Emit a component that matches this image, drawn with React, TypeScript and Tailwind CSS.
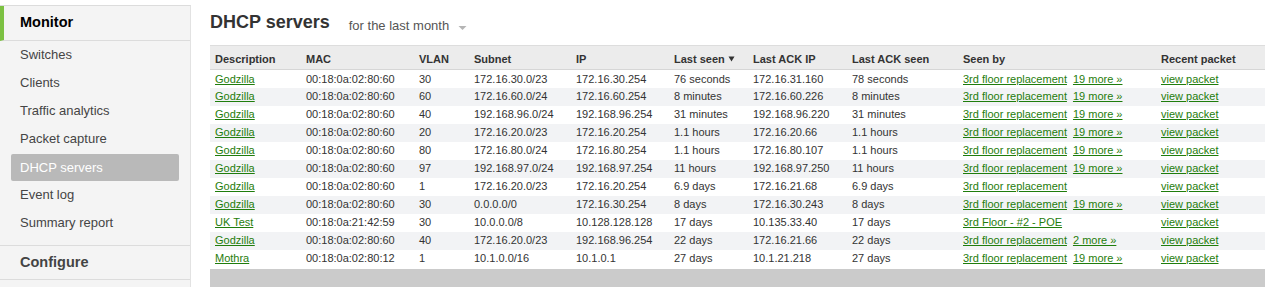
import React from "react";

type Row = {
  d: string; mac: string; vlan: string; subnet: string; ip: string; seen: string;
  ackip: string; ackseen: string; by: string; more?: string;
};

const rows: Row[] = [
  { d: "Godzilla", mac: "00:18:0a:02:80:60", vlan: "30", subnet: "172.16.30.0/23", ip: "172.16.30.254", seen: "76 seconds", ackip: "172.16.31.160", ackseen: "78 seconds", by: "3rd floor replacement", more: "19 more »" },
  { d: "Godzilla", mac: "00:18:0a:02:80:60", vlan: "60", subnet: "172.16.60.0/24", ip: "172.16.60.254", seen: "8 minutes", ackip: "172.16.60.226", ackseen: "8 minutes", by: "3rd floor replacement", more: "19 more »" },
  { d: "Godzilla", mac: "00:18:0a:02:80:60", vlan: "40", subnet: "192.168.96.0/24", ip: "192.168.96.254", seen: "31 minutes", ackip: "192.168.96.220", ackseen: "31 minutes", by: "3rd floor replacement", more: "19 more »" },
  { d: "Godzilla", mac: "00:18:0a:02:80:60", vlan: "20", subnet: "172.16.20.0/23", ip: "172.16.20.254", seen: "1.1 hours", ackip: "172.16.20.66", ackseen: "1.1 hours", by: "3rd floor replacement", more: "19 more »" },
  { d: "Godzilla", mac: "00:18:0a:02:80:60", vlan: "80", subnet: "172.16.80.0/24", ip: "172.16.80.254", seen: "1.1 hours", ackip: "172.16.80.107", ackseen: "1.1 hours", by: "3rd floor replacement", more: "19 more »" },
  { d: "Godzilla", mac: "00:18:0a:02:80:60", vlan: "97", subnet: "192.168.97.0/24", ip: "192.168.97.254", seen: "11 hours", ackip: "192.168.97.250", ackseen: "11 hours", by: "3rd floor replacement", more: "19 more »" },
  { d: "Godzilla", mac: "00:18:0a:02:80:60", vlan: "1", subnet: "172.16.20.0/23", ip: "172.16.20.254", seen: "6.9 days", ackip: "172.16.21.68", ackseen: "6.9 days", by: "3rd floor replacement" },
  { d: "Godzilla", mac: "00:18:0a:02:80:60", vlan: "30", subnet: "0.0.0.0/0", ip: "172.16.30.254", seen: "8 days", ackip: "172.16.30.243", ackseen: "8 days", by: "3rd floor replacement", more: "19 more »" },
  { d: "UK Test", mac: "00:18:0a:21:42:59", vlan: "30", subnet: "10.0.0.0/8", ip: "10.128.128.128", seen: "17 days", ackip: "10.135.33.40", ackseen: "17 days", by: "3rd Floor - #2 - POE" },
  { d: "Godzilla", mac: "00:18:0a:02:80:60", vlan: "40", subnet: "172.16.20.0/23", ip: "192.168.96.254", seen: "22 days", ackip: "172.16.21.66", ackseen: "22 days", by: "3rd floor replacement", more: "2 more »" },
  { d: "Mothra", mac: "00:18:0a:02:80:12", vlan: "1", subnet: "10.1.0.0/16", ip: "10.1.0.1", seen: "27 days", ackip: "10.1.21.218", ackseen: "27 days", by: "3rd floor replacement", more: "19 more »" },
];

const widths = [91, 113, 55, 102, 98, 79, 99, 111, 198, 109];
const headers = ["Description", "MAC", "VLAN", "Subnet", "IP", "Last seen", "Last ACK IP", "Last ACK seen", "Seen by", "Recent packet"];

const navItems = ["Switches", "Clients", "Traffic analytics", "Packet capture", "DHCP servers", "Event log", "Summary report"];

function L({ children }: { children: React.ReactNode }) {
  return <a href="#" className="text-[#1f7d0c] underline decoration-1 underline-offset-[1px]">{children}</a>;
}

export default function App() {
  return (
    <div className="flex w-[1278px] h-[287px] overflow-hidden bg-white" style={{ fontFamily: '"Liberation Sans", Arial, sans-serif' }}>
      <aside className="mt-[5px] w-[191px] shrink-0 bg-[#f4f4f4] border-r border-[#e2e2e2] border-t border-t-[#dcdcdc] flex flex-col">
        <div className="h-[35px] flex items-center border-l-4 border-[#7cc142] pl-[16px] border-b border-b-[#dcdcdc] text-[14.5px] font-bold text-black">
          Monitor
        </div>
        <div className="flex flex-col">
          {navItems.map((n) =>
            n === "DHCP servers" ? (
              <div key={n} className="h-[28px] flex items-center">
                <div className="mx-[11px] mt-[1px] h-[27px] flex-1 flex items-center pl-[9px] bg-[#b9b9b9] rounded-[2px] text-white text-[13px]">
                  {n}
                </div>
              </div>
            ) : (
              <div key={n} className="h-[28px] flex items-center pl-[20px] text-[13px] text-[#454545]">
                {n}
              </div>
            )
          )}
        </div>
        <div className="mt-[8px] border-t border-[#dcdcdc] h-[35px] flex items-center pl-[20px] text-[14.5px] font-bold text-[#444] border-b border-b-[#dcdcdc]">
          Configure
        </div>
      </aside>
      <main className="pl-[19px] pr-[13px] flex-1 min-w-0">
        <div className="mt-[10px] h-[24px] flex items-end">
          <h1 className="text-[18px] font-bold text-[#333] leading-[24px]">DHCP servers</h1>
          <div className="ml-[19px] -mb-[1px] flex items-center text-[13px] text-[#555] leading-[18px]">
            <span>for the last month</span>
            <svg width="9" height="6" viewBox="0 0 9 6" className="ml-[9px] mt-[3px]">
              <path d="M0.5 1 L8.5 1 L4.5 5 Z" fill="#b5b5b5" />
            </svg>
          </div>
        </div>
        <table className="mt-[11px] w-[1055px] border-collapse table-fixed text-[11px] text-[#333]">
          <colgroup>
            {widths.map((w, i) => (
              <col key={i} style={{ width: w }} />
            ))}
          </colgroup>
          <thead>
            <tr className="h-[24px] bg-[#ececec] border-t border-[#dddddd] border-b border-b-[#d6d6d6]">
              {headers.map((h) => (
                <th key={h} className="text-left font-bold pl-[5px] pt-[3px] pb-0 pr-0 text-[#333] whitespace-nowrap">
                  {h}
                  {h === "Last seen" && (
                    <svg width="7" height="6" viewBox="0 0 7 6" className="inline-block ml-[3px] align-[1px]">
                      <path d="M0.5 0.5 L6.5 0.5 L3.5 5.5 Z" fill="#333" />
                    </svg>
                  )}
                </th>
              ))}
            </tr>
          </thead>
          <tbody>
            {rows.map((r, i) => (
              <tr key={i} className={`h-[18px] ${i % 2 === 1 ? "bg-[#f2f3f5]" : "bg-white"}`}>
                <td className="pl-[5px] p-0 whitespace-nowrap"><L>{r.d}</L></td>
                <td className="pl-[5px] p-0 whitespace-nowrap">{r.mac}</td>
                <td className="pl-[5px] p-0 whitespace-nowrap">{r.vlan}</td>
                <td className="pl-[5px] p-0 whitespace-nowrap">{r.subnet}</td>
                <td className="pl-[5px] p-0 whitespace-nowrap">{r.ip}</td>
                <td className="pl-[5px] p-0 whitespace-nowrap">{r.seen}</td>
                <td className="pl-[5px] p-0 whitespace-nowrap">{r.ackip}</td>
                <td className="pl-[5px] p-0 whitespace-nowrap">{r.ackseen}</td>
                <td className="pl-[5px] p-0 whitespace-nowrap">
                  <L>{r.by}</L>
                  {r.more && <span className="ml-[6px]"><L>{r.more}</L></span>}
                </td>
                <td className="pl-[5px] p-0 whitespace-nowrap"><L>view packet</L></td>
              </tr>
            ))}
          </tbody>
        </table>
        <div className="mt-[1px] w-[1055px] h-[30px] bg-[#cbcbcb]" />
      </main>
    </div>
  );
}
